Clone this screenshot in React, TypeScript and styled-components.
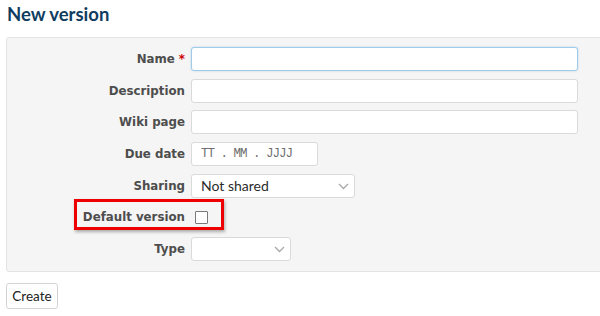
import React from 'react';
import styled, { createGlobalStyle } from 'styled-components';

const GlobalStyle = createGlobalStyle`
  html, body {
    margin: 0;
    padding: 0;
    background: #ffffff;
    overflow: hidden;
  }
  body {
    font-family: "DejaVu Sans", Verdana, sans-serif;
    width: 600px;
    height: 316px;
  }
`;

const Page = styled.div`
  padding: 2px 0 0 6px;
  width: 610px;
`;

const Title = styled.h2`
  margin: 0 0 11px 1px;
  font-family: Lato, "Open Sans", sans-serif;
  font-weight: 700;
  font-size: 18.5px;
  line-height: 24px;
  color: #0f3c5f;
`;

const Panel = styled.div`
  background: #f5f5f5;
  border: 1px solid #e3e3e3;
  border-radius: 3px 0 0 3px;
  padding: 9px 0 10px 0;
  display: flex;
  flex-direction: column;
  gap: 7.65px;
`;

const Row = styled.div`
  position: relative;
  display: grid;
  grid-template-columns: 178px 1fr;
  column-gap: 6px;
  align-items: center;
  height: 24px;
`;

const Label = styled.label`
  justify-self: end;
  font-family: "DejaVu Sans", Verdana, sans-serif;
  font-weight: bold;
  font-size: 11.8px;
  color: #4d4d4d;
  white-space: nowrap;
`;

const Required = styled.span`
  color: #cc0000;
  margin-left: 4px;
`;

const TextInput = styled.input<{ $width: number; $focused?: boolean; $mono?: boolean }>`
  box-sizing: border-box;
  width: ${p => p.$width}px;
  height: 24px;
  margin: 0;
  padding: 0 9px;
  background: #ffffff;
  border: 1px solid ${p => (p.$focused ? '#9fcbe9' : '#dadada')};
  border-radius: 3px;
  box-shadow: ${p => (p.$focused ? '0 0 2px rgba(120, 180, 225, 0.5)' : 'none')};
  outline: none;
  font-family: ${p => (p.$mono ? '"Liberation Mono", "Courier New", monospace' : 'Lato, "Open Sans", sans-serif')};
  font-size: ${p => (p.$mono ? '12.5px' : '14px')};
  letter-spacing: ${p => (p.$mono ? '-1px' : 'normal')};
  color: #333;

  &::placeholder {
    color: #6f6f6f;
  }
`;

const SelectWrap = styled.div<{ $width: number }>`
  position: relative;
  width: ${p => p.$width}px;
  height: 24px;
`;

const Select = styled.select`
  box-sizing: border-box;
  appearance: none;
  width: 100%;
  height: 100%;
  margin: 0;
  padding: 0 24px 0 9px;
  background: #ffffff;
  border: 1px solid #dadada;
  border-radius: 3px;
  outline: none;
  font-family: Lato, "Open Sans", sans-serif;
  font-size: 14px;
  color: #2b2b2b;
`;

const Chevron = styled.svg`
  position: absolute;
  right: 6px;
  top: 9px;
  pointer-events: none;
`;

const Checkbox = styled.input`
  appearance: none;
  box-sizing: border-box;
  width: 13px;
  height: 13px;
  margin: 0 0 0 4px;
  background: #ffffff;
  border: 1px solid #7a7a7a;
  border-radius: 1px;
`;

const Highlight = styled.div`
  position: absolute;
  left: 67px;
  top: -6px;
  width: 150px;
  height: 31px;
  box-sizing: border-box;
  border: 3px solid #ee0000;
  box-shadow: 1px 2px 3px rgba(0, 0, 0, 0.3);
  pointer-events: none;
`;

const Actions = styled.div`
  margin-top: 11px;
`;

const Button = styled.button`
  box-sizing: border-box;
  height: 26px;
  width: 52px;
  padding: 0;
  background: #ffffff;
  border: 1px solid #d3d3d3;
  border-radius: 3px;
  font-family: Lato, "Open Sans", sans-serif;
  font-size: 13.5px;
  color: #222;
`;

const DropdownField: React.FC<{ width: number; value?: string }> = ({ width, value }) => (
  <SelectWrap $width={width}>
    <Select defaultValue={value ?? ''}>
      {value ? <option value={value}>{value}</option> : <option value="" />}
    </Select>
    <Chevron width="11" height="7" viewBox="0 0 11 7">
      <path d="M1 1 L5.5 5.5 L10 1" fill="none" stroke="#a8a8a8" strokeWidth="1.3" />
    </Chevron>
  </SelectWrap>
);

const App: React.FC = () => (
  <>
    <GlobalStyle />
    <Page>
      <Title>New version</Title>
      <Panel>
        <Row>
          <Label>
            Name<Required>*</Required>
          </Label>
          <TextInput $width={387} $focused />
        </Row>
        <Row>
          <Label>Description</Label>
          <TextInput $width={387} />
        </Row>
        <Row>
          <Label>Wiki page</Label>
          <TextInput $width={387} />
        </Row>
        <Row>
          <Label>Due date</Label>
          <TextInput $width={127} $mono placeholder="TT . MM . JJJJ" />
        </Row>
        <Row>
          <Label>Sharing</Label>
          <DropdownField width={164} value="Not shared" />
        </Row>
        <Row>
          <Label>Default version</Label>
          <Checkbox type="checkbox" />
          <Highlight />
        </Row>
        <Row>
          <Label>Type</Label>
          <DropdownField width={100} />
        </Row>
      </Panel>
      <Actions>
        <Button>Create</Button>
      </Actions>
    </Page>
  </>
);

export default App;
